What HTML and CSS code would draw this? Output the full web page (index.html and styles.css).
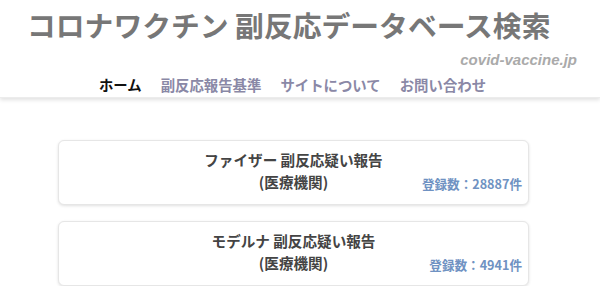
FILE: index.html
```html
<!DOCTYPE html>
<html lang="ja">
<head>
<meta charset="utf-8">
<title>コロナワクチン 副反応データベース検索</title>
<link rel="stylesheet" href="styles.css">
</head>
<body>
<header class="site-header">
  <h1 class="site-title">コロナワクチン 副反応データベース検索</h1>
  <div class="site-domain">covid-vaccine.jp</div>
  <nav class="site-nav">
    <a class="nav-link active" href="#">ホーム</a>
    <a class="nav-link" href="#">副反応報告基準</a>
    <a class="nav-link" href="#">サイトについて</a>
    <a class="nav-link" href="#">お問い合わせ</a>
  </nav>
</header>
<main class="cards">
  <a class="card" href="#">
    <div class="card-title">ファイザー 副反応疑い報告<br>(医療機関)</div>
    <div class="card-count">登録数：28887件</div>
  </a>
  <a class="card" href="#">
    <div class="card-title">モデルナ 副反応疑い報告<br>(医療機関)</div>
    <div class="card-count">登録数：4941件</div>
  </a>
</main>
</body>
</html>
```
FILE: styles.css
```css
html, body {
  margin: 0;
  padding: 0;
  background: #ffffff;
}
body {
  font-family: "Noto Sans CJK JP", "Liberation Sans", sans-serif;
  width: 600px;
  overflow: hidden;
}
.site-header {
  padding-top: 7px;
  box-shadow: 0 2px 4px rgba(0, 0, 0, 0.12);
  border-bottom: 1px solid #ececec;
  background: #fff;
}
.site-title {
  margin: 0 0 0 27px;
  font-size: 28.8px;
  line-height: 36px;
  font-weight: 700;
  color: #777777;
  letter-spacing: 0;
  white-space: nowrap;
}
.site-domain {
  text-align: right;
  padding-right: 23px;
  margin-top: 8px;
  font-family: "Liberation Sans", sans-serif;
  font-style: italic;
  font-weight: 700;
  font-size: 15px;
  line-height: 18px;
  color: #aaaaaa;
}
.site-nav {
  display: flex;
  justify-content: center;
  gap: 19px;
  padding: 6px 0 2px 0;
  margin-left: -15px;
}
.nav-link {
  font-size: 14.4px;
  line-height: 20px;
  font-weight: 700;
  color: #8a88a6;
  text-decoration: none;
}
.nav-link.active {
  color: #111111;
}
.cards {
  display: flex;
  flex-direction: column;
  gap: 16px;
  padding: 42px 71px 0 58px;
}
.card {
  display: grid;
  grid-template-columns: 1fr auto 1fr;
  border: 1px solid #e6e6e6;
  border-radius: 6px;
  box-shadow: 0 1px 3px rgba(0, 0, 0, 0.12);
  padding: 8px 6px 11px 6px;
  text-decoration: none;
  background: #fff;
}
.card-title {
  grid-column: 2;
  text-align: center;
  font-size: 14.6px;
  line-height: 22px;
  font-weight: 700;
  color: #444444;
}
.card-count {
  grid-column: 3;
  justify-self: end;
  align-self: end;
  font-size: 12.6px;
  line-height: 18px;
  font-weight: 700;
  color: #6f92c2;
  white-space: nowrap;
}
```
